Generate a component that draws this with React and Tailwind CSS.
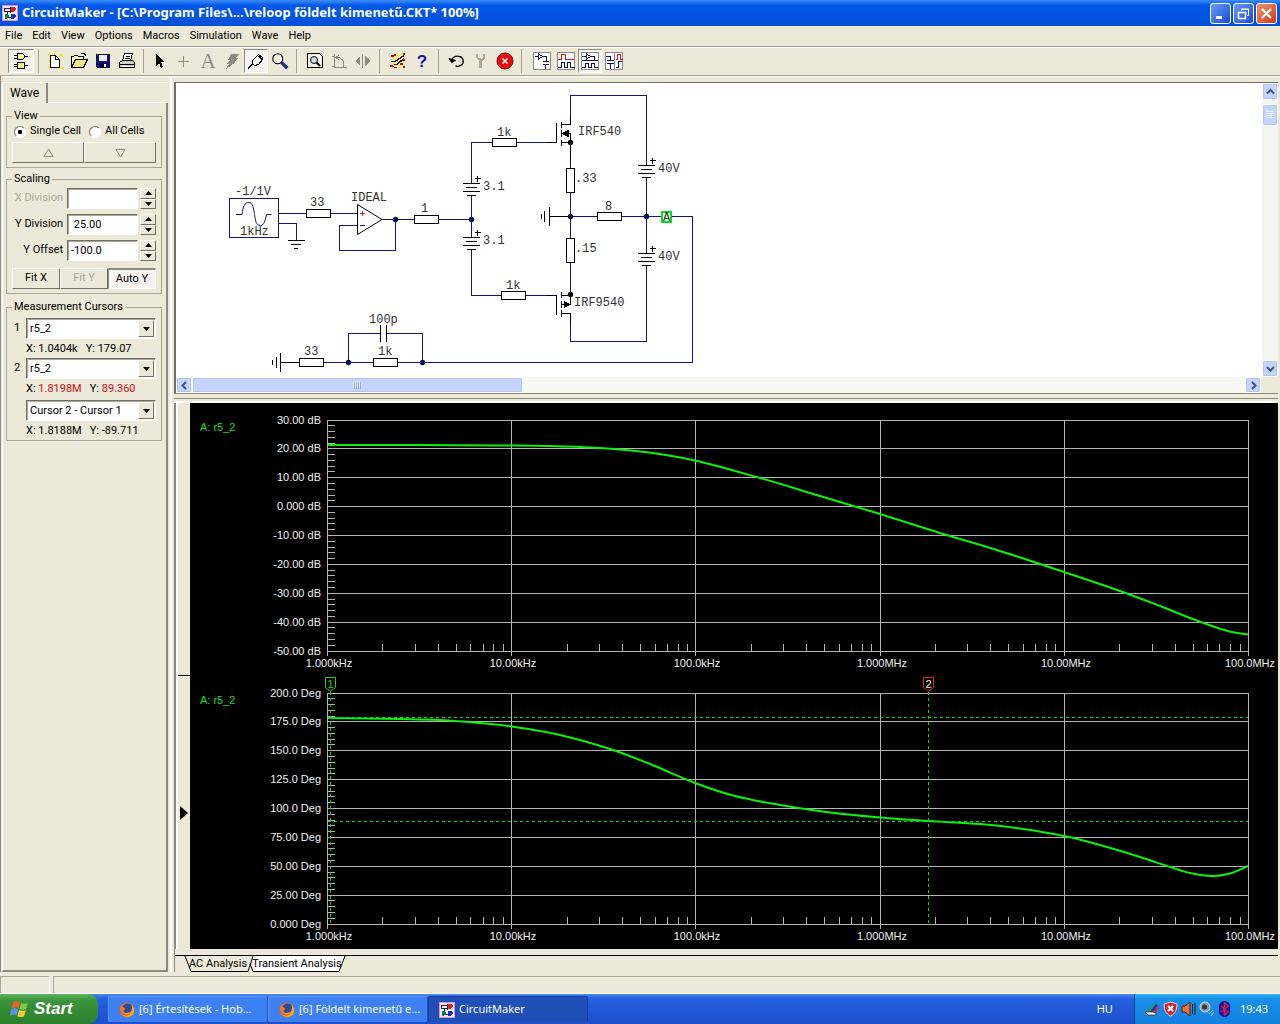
import React from "react";

/* ---------- title bar and toolbar icons ---------- */

const AppIcon = ({ size = 16 }) => (
  <svg width={size} height={size} viewBox="0 0 16 16" shapeRendering="crispEdges" className="shrink-0">
    <rect width="16" height="16" fill="#f4f0f8" />
    <path d="M0 .5h16M.5 0v16M0 15.500h16M15.500 0v16" stroke="#e88ad0" fill="none" />
    <path d="M2 3.500h6M2 6.500h6M5.500 7v5M2.500 4v3M8.500 2v6M5 12.500h4" stroke="#223" fill="none" />
    <path d="M9 2h3l2 2-2 3H9z" fill="#e02020" />
    <path d="M9 9h3l2 2-2 3H9z" fill="#1030c0" />
    <path d="M3 9h2l2 2-2 3H3z" fill="#108040" />
  </svg>
);

const Ico = ({ children, s = 18 }) => (
  <svg width={s} height={s} viewBox="0 0 18 18" fill="none" stroke="#000" shapeRendering="crispEdges" className="shrink-0">
    {children}
  </svg>
);

const icons = {
  gates: (
    <Ico>
      <path d="M5.500 1.500h5l2 2v2l-2 2h-5zM5.500 10.500h7v6h-7z" fill="#f6f6a0" />
      <path d="M2 3.500h3M2 6.500h3M13 4.500h3M2 12.500h3M2 14.500h3M13 13.500h3" />
    </Ico>
  ),
  fresh: (
    <Ico>
      <path d="M3 2l3 3M16 2l-2 3M2 9h2M15 15l2 2M2 16l2-2M9 1v2" stroke="#f4f000" strokeWidth="2" />
      <path d="M4.500 3.500h5l4 4v8h-9z" fill="#fff" />
      <path d="M9.500 3.500v4h4" />
    </Ico>
  ),
  open: (
    <Ico>
      <path d="M1.500 15.500v-11h2l1-1h3l1 1h5v3" fill="#fdfdb0" />
      <path d="M1.500 15.500l4-8h12l-4 8z" fill="#f0e880" />
      <path d="M11 1.500h3l2 2" />
    </Ico>
  ),
  save: (
    <Ico>
      <path d="M2.500 2.500h13v13h-12l-1-1z" fill="#101078" stroke="#101060" />
      <path d="M5 3h8v6H5z" fill="#e8ecf4" stroke="none" />
      <path d="M5 11h8v5H5z" fill="#000040" stroke="none" />
      <path d="M10 12h2v3h-2z" fill="#fff" stroke="none" />
    </Ico>
  ),
  print: (
    <Ico>
      <path d="M4.500 8.500l2-7h8l-2 7z" fill="#fff" />
      <path d="M8 4.500h4M7 6.500h5" />
      <path d="M1.500 10.500l3-2h10l2 2v5h-15z" fill="#d4d0c8" />
      <path d="M1.500 12.500h15" />
      <path d="M4 14.500h8" stroke="#fff" />
    </Ico>
  ),
  pointer: (
    <Ico>
      <path d="M5 2v12l3-3 2 5 2-1-2-5h4z" fill="#000" stroke="none" />
    </Ico>
  ),
  plus: (
    <Ico>
      <path d="M8.500 4v11M3 9.500h11" stroke="#8c8a80" />
    </Ico>
  ),
  letter: <span className="font-['Liberation_Serif',serif] text-[21px] leading-none text-[#8c8a80]">A</span>,
  bolt: (
    <Ico>
      <path d="M8 2h8l-3 4h2l-4 4h2L3 17l3-5H4l3-4H5z" fill="#8c8a80" stroke="none" />
    </Ico>
  ),
  probe: (
    <Ico>
      <path d="M1 16.500l5-5" />
      <path d="M5.500 11.500v-3l5-5 5 4-4 5-4 1z" fill="#fff" />
      <path d="M9.500 4.500l2-2 4 3-1 3" />
    </Ico>
  ),
  zoom: (
    <Ico s={20}>
      <circle cx="7" cy="7" r="4.500" fill="#f4f4e8" shapeRendering="auto" />
      <path d="M10.500 10.500l5 5" stroke="#1a2e9c" strokeWidth="3" shapeRendering="auto" />
    </Ico>
  ),
  preview: (
    <Ico>
      <path d="M1.500 1.500h12l3 3v11h-15z" fill="#f4f4ea" />
      <circle cx="8" cy="8" r="3.500" fill="#cfe4e4" shapeRendering="auto" />
      <path d="M10.500 10.500l3.500 3.500" strokeWidth="2" shapeRendering="auto" />
    </Ico>
  ),
  rotate: (
    <Ico>
      <path d="M4.500 2v13h12M2 4.500h3M2 14.500h3" stroke="#8c8a80" />
      <path d="M7 5.500c5 0 7 3 7 9M9 3L6 5.500 9 8" stroke="#8c8a80" />
    </Ico>
  ),
  mirror: (
    <Ico>
      <path d="M6 4v10L1 9zM11 4v10l5-5z" fill="#8c8a80" stroke="none" />
      <path d="M8.500 2v14" stroke="#8c8a80" />
    </Ico>
  ),
  traces: (
    <Ico>
      <path d="M4 2h11v13H4z" fill="#fcf080" stroke="none" />
      <path d="M2 9.500h4l9-6M5 12.500h3l7-6M2 14.500h3" stroke="#101070" strokeWidth="1.500" />
      <path d="M5 2h2v2H5zM2 3h3v2H2zM14 1h2v2h-2zM1 13h3v2H1zM5 15h3v1H5zM11 11h3v2h-3zM14 14h2v2h-2zM13 7h3v2h-3z" fill="#b01010" stroke="none" />
    </Ico>
  ),
  help: <span className="font-['Liberation_Sans',sans-serif] text-[17px] leading-none text-[#1616b0] font-bold">?</span>,
  undo: (
    <Ico>
      <g shapeRendering="auto">
        <path d="M3.500 8.500c1-4 5-5 8-4 4 1 5 6 2 8.500-2 1.500-4 1.500-6 1" strokeWidth="1.300" />
        <path d="M1 6.500l2.500 4 4-2z" fill="#000" />
      </g>
    </Ico>
  ),
  wrench: (
    <Ico>
      <path d="M4 2v4l3 3v7h3V9l3-3V2h-2v4h-1l-1 1-1-1H6V2z" fill="#aaa89c" stroke="none" />
    </Ico>
  ),
  stop: (
    <Ico>
      <g shapeRendering="auto">
        <circle cx="9" cy="9" r="8" fill="#e80c0c" stroke="#7a0a0a" />
        <path d="M6.500 6.500l5 5M11.500 6.500l-5 5" stroke="#fff" strokeWidth="1.500" />
      </g>
    </Ico>
  ),
  schem: (
    <Ico>
      <rect x=".5" y=".5" width="17" height="17" fill="#fff" stroke="#888" />
      <path d="M2 4.500h3M5.500 2v5l4-2.500zM9 4.500h4v5M10 9.500h6M10 12.500h6M12.500 13v4" stroke="#101050" />
    </Ico>
  ),
  waveRed: (
    <Ico>
      <rect x=".5" y=".5" width="17" height="17" fill="#fff" stroke="#888" />
      <path d="M1 7.500h3.500v-5h4v5h8" stroke="#e01010" />
      <path d="M1 15.500h3.500v-5h3v5h3v-5h3v5h4" stroke="#101050" />
    </Ico>
  ),
  split: (
    <Ico>
      <rect x=".5" y=".5" width="17" height="17" fill="#fff" stroke="#888" />
      <path d="M1 8.500h16M1 4.500h4M5.500 2v5l4-2.500zM9 4.500h4.500v4M1 15.500h3.500v-4h3v4h3v-4h3v4h3" stroke="#101050" />
    </Ico>
  ),
  sideBySide: (
    <Ico>
      <rect x=".5" y=".5" width="17" height="17" fill="#fff" stroke="#888" />
      <path d="M9.500 1v16" stroke="#888" />
      <path d="M1 4.500h4.500v4M2 8.500h7M2 11.500h7M5.500 12v5M11 15.500h2.500v-6h3" stroke="#101050" />
      <path d="M11 7.500h1.500v-5h3v5h2" stroke="#e01010" />
    </Ico>
  ),
};

const toolGroups = [
  [["gates", "Parts browser", true]],
  [["fresh", "New"], ["open", "Open"], ["save", "Save"], ["print", "Print"]],
  [["pointer", "Select"], ["plus", "Wire"], ["letter", "Text"], ["bolt", "Delete"], ["probe", "Probe", true], ["zoom", "Zoom"]],
  [["preview", "Fit view"], ["rotate", "Rotate"], ["mirror", "Mirror"]],
  [["traces", "Digital mode"], ["help", "Help"]],
  [["undo", "Reset"], ["wrench", "Setup"], ["stop", "Stop"]],
  [["schem", "Schematic"], ["waveRed", "Waveforms"], ["split", "Split horizontally", true], ["sideBySide", "Split vertically"]],
];

const RAISED = "border border-t-white border-l-white border-r-[#716f64] border-b-[#716f64] bg-[#ece9d8]";
const SUNKEN = "border border-t-[#8c8a80] border-l-[#8c8a80] border-r-white border-b-white bg-[#f6f4ee]";

function TitleBar() {
  const btn = "flex h-[21px] w-[21px] items-center justify-center rounded-[3px] border border-white";
  return (
    <header className="flex h-[26px] items-center bg-linear-to-b from-[#3a8cf8] via-[#0458e8] via-20% to-[#0450d8] pl-[2px] pr-[3px]">
      <AppIcon />
      <h1 className="ml-1 flex-1 truncate font-['Noto_Sans','Open_Sans',sans-serif] text-[13px] font-bold text-white">
        CircuitMaker - [C:\Program Files\...\reloop földelt kimenetű.CKT* 100%]
      </h1>
      <div className="flex gap-[2px]">
        <button aria-label="Minimize" className={`${btn} bg-linear-to-br from-[#6a9cf8] to-[#1a48d0]`}>
          <svg width="15" height="15"><path d="M3 11.500h6" stroke="#fff" strokeWidth="3" /></svg>
        </button>
        <button aria-label="Restore" className={`${btn} bg-linear-to-br from-[#6a9cf8] to-[#1a48d0]`}>
          <svg width="15" height="15" fill="none" stroke="#fff"><path d="M5.500 5V3.500h7v6H11M5 3h8" /><path d="M2.500 6.500h7v6h-7zM2 6.500h8" strokeWidth="1.500" /></svg>
        </button>
        <button aria-label="Close" className={`${btn} bg-linear-to-br from-[#f09070] to-[#c83810]`}>
          <svg width="15" height="15"><path d="M3 3l9 9M12 3l-9 9" stroke="#fff" strokeWidth="2.200" /></svg>
        </button>
      </div>
    </header>
  );
}

function MenuBar() {
  return (
    <nav className="flex h-5 items-center text-[11px]">
      {["File", "Edit", "View", "Options", "Macros", "Simulation", "Wave", "Help"].map((m) => (
        <button key={m} className="px-[5px]">{m}</button>
      ))}
    </nav>
  );
}

function Toolbar() {
  return (
    <div className="flex h-[30px] items-center border-y border-[#a5a294] pl-2 shadow-[inset_0_1px_#fff,0_1px_#fff]" role="toolbar">
      {toolGroups.map((g, i) => (
        <React.Fragment key={i}>
          {i > 0 && <span className={`ml-1 h-6 w-px bg-[#a5a294] ${i < 3 ? "mr-1" : i < 6 ? "mr-1.5" : "mr-2"}`} />}
          {g.map(([name, label, pressed]) => (
            <button
              key={name}
              aria-label={label}
              className={`flex h-6 items-center justify-center ${i === 0 ? "w-[26px]" : "w-6"} ${pressed ? SUNKEN : ""}`}
            >
              {icons[name]}
            </button>
          ))}
        </React.Fragment>
      ))}
    </div>
  );
}

/* ---------- left panel ---------- */

function Group({ title, className = "", children }) {
  return (
    <fieldset className={`min-w-0 border border-[#aca899] px-[5px] ${className}`}>
      <legend className="px-[2px] leading-4">{title}</legend>
      {children}
    </fieldset>
  );
}

const Tri = ({ up }) => (
  <svg width="7" height="4" viewBox="0 0 7 4"><path d={up ? "M0 4h7L3.500 0z" : "M0 0h7L3.500 4z"} /></svg>
);

const FIELD = "border border-t-[#716f64] border-l-[#716f64] border-r-white border-b-white bg-white shadow-[inset_1px_1px_#aca899]";

function NumberRow({ id, label, value, disabled }) {
  return (
    <div className="flex h-[21px] items-center">
      <label htmlFor={id} className={`w-[51px] whitespace-nowrap text-right ${disabled ? "text-[#aca899]" : ""}`}>{label}</label>
      <input id={id} defaultValue={value} disabled={disabled} className={`ml-1 h-[21px] w-0 flex-1 pl-[3px] ${FIELD}`} />
      <div className="ml-[2px] flex h-[21px] w-4 flex-col">
        <button aria-label={`${label} up`} className={`flex flex-1 items-center justify-center ${RAISED}`}><Tri up /></button>
        <button aria-label={`${label} down`} className={`flex flex-1 items-center justify-center ${RAISED}`}><Tri /></button>
      </div>
    </div>
  );
}

function Combo({ label, value }) {
  return (
    <div className={`relative h-[21px] flex-1 ${FIELD}`}>
      <select aria-label={label} defaultValue={value} className="h-full w-full appearance-none bg-transparent pl-[3px] pt-px outline-none">
        <option>{value}</option>
      </select>
      <span className={`pointer-events-none absolute inset-y-px right-px flex w-4 items-center justify-center ${RAISED}`}><Tri /></span>
    </div>
  );
}

function Radio({ label, checked }) {
  return (
    <label className="flex items-center gap-1">
      <input
        type="radio"
        name="cells"
        defaultChecked={checked}
        className="h-3 w-3 appearance-none rounded-full border border-t-[#716f64] border-l-[#716f64] border-r-white border-b-white bg-white bg-center checked:bg-[radial-gradient(circle,#000_2px,#fff_2.500px)]"
      />
      {label}
    </label>
  );
}

function CursorReadout({ x, y, red }) {
  const c = red ? "text-[#d01020]" : "";
  return (
    <p className="flex h-[19px] items-center gap-2 pl-[14px] pt-px">
      <span>X: <span className={c}>{x}</span></span>
      <span>Y: <span className={c}>{y}</span></span>
    </p>
  );
}

function SidePanel() {
  return (
    <aside className="flex w-[170px] shrink-0 flex-col border-l border-[#8c8a80] pl-px pt-[6px] pr-[2px]">
      <div className="flex h-[21px] border-t border-white">
        <button className="w-[46px] border-l border-r-2 border-l-white border-r-[#8c8a80] text-[12px]">Wave</button>
        <span className="flex-1 border-b border-white" />
      </div>
      <div className="flex flex-1 flex-col border-b-2 border-l border-r-2 border-b-[#8c8a80] border-l-white border-r-[#8c8a80] pl-[3px] pr-1 pt-[5px]">
        <Group title="View" className="pb-1">
          <div className="flex h-[15px] items-center gap-2 pl-[2px]">
            <Radio label="Single Cell" checked />
            <Radio label="All Cells" />
          </div>
          <div className="mt-[3px] flex">
            <button aria-label="Previous cell" className={`flex h-[21px] flex-1 items-center justify-center ${RAISED}`}>
              <svg width="11" height="10" fill="none" stroke="#8c8a80"><path d="M1 8.500h9L5.500 1z" /></svg>
            </button>
            <button aria-label="Next cell" className={`flex h-[21px] flex-1 items-center justify-center ${RAISED}`}>
              <svg width="11" height="10" fill="none" stroke="#8c8a80"><path d="M1 1.500h9L5.500 9z" /></svg>
            </button>
          </div>
        </Group>
        <Group title="Scaling" className="mt-[3px] pb-1">
          <div className="mt-px flex flex-col gap-[5px]">
            <NumberRow id="xdiv" label="X Division" value="" disabled />
            <NumberRow id="ydiv" label="Y Division" value=" 25.00" />
            <NumberRow id="yoff" label="Y Offset" value="-100.0" />
          </div>
          <div className="mt-[7px] flex">
            <button className={`h-[21px] flex-1 ${RAISED}`}>Fit X</button>
            <button disabled className={`h-[21px] flex-1 text-[#aca899] ${RAISED}`}>Fit Y</button>
            <button className={`h-[21px] flex-1 border-t-2 ${SUNKEN}`}>Auto Y</button>
          </div>
        </Group>
        <Group title="Measurement Cursors" className="mt-[5px]">
          <div className="flex items-center pt-[3px]"><span className="w-[14px] pl-[2px]">1</span><Combo label="Cursor 1" value="r5_2" /></div>
          <CursorReadout x="1.0404k" y="179.07" />
          <div className="flex items-center"><span className="w-[14px] pl-[2px]">2</span><Combo label="Cursor 2" value="r5_2" /></div>
          <CursorReadout x="1.8198M" y="89.360" red />
          <div className="flex items-center pl-[14px] pt-[2px]"><Combo label="Difference" value="Cursor 2 - Cursor 1" /></div>
          <CursorReadout x="1.8188M" y="-89.711" />
        </Group>
      </div>
    </aside>
  );
}

/* ---------- schematic ---------- */

const Res = ({ x, y, v }) => (
  <rect x={x + 0.5} y={y + 0.5} width={v ? 8 : 24} height={v ? 24 : 8} fill="#fff" stroke="#000" />
);
const Dot = ({ x, y, fill = "#0a1050" }) => <circle cx={x + 0.5} cy={y + 0.5} r="2.700" fill={fill} shapeRendering="auto" />;
const Battery = ({ x, y }) => (
  <path
    d={`M${x - 8} ${y + 0.5}h17M${x - 5} ${y + 4.5}h11M${x - 8} ${y + 8.5}h17M${x - 4} ${y + 12.5}h9M${x + 4} ${y - 4.5}h6M${x + 6.5} ${y - 7}v6`}
  />
);

function Schematic() {
  const labels = [
    [235, 195, "-1/1V"], [240, 235, "1kHz"], [310, 206, "33"], [351, 201, "IDEAL"], [421, 212, "1"],
    [497, 136, "1k"], [483, 190, "3.1"], [483, 244, "3.1"], [506, 289, "1k"], [578, 135, "IRF540"],
    [575, 182, ".33"], [575, 252, ".15"], [574, 306, "IRF9540"], [605, 210, "8"], [658, 172, "40V"],
    [658, 260, "40V"], [369, 323, "100p"], [304, 355, "33"], [378, 355, "1k"],
  ];
  return (
    <svg viewBox="176 83 1086 294" width="1086" height="294" fill="none" shapeRendering="crispEdges" role="img" aria-label="Amplifier schematic">
      <g stroke="#14147c">
        <path d="M229.500 198.500h49v39h-49zM279 213.500h27M331 213.500h26M279 223.500h17.500v16M382 219.500h32M395.500 219v31.500h-56v-25h18M438 219.500h33M471.500 183v-40.500h21M471.500 196v41M471.500 250v45.500h30M517 142.500h30M525 295.500h22" />
        <path d="M570.500 124v-28.500h76v70M646.500 178v75M646.500 266v75.500h-76v-28M570.500 142v26M570.500 193v45M570.500 263v32M570 216.500h28M622 216.500h39M672 216.500h20.500v146h-295M324 362.500h49M348.500 362v-28.500h31M387 333.500h35.500v29" />
        <path d="M236 214.500h6C243 206 245 202.500 248.500 202.500C253 202.500 253.500 208 254.500 214.500C255.500 221 256 225.500 260.500 225.500C264 225.500 265 221 266.500 214.500h5" shapeRendering="auto" />
      </g>
      <g stroke="#000">
        <path d="M288 240.500h17M291 244.500h10M294 248.500h4" />
        <path d="M357.500 204.500v30l24.500-15z" fill="#fff" shapeRendering="auto" />
        <path d="M360 225.500h5" stroke="#14147c" />
        <path d="M360 213.500h5M362.500 211v5" stroke="#d02020" />
        <path d="M547 142.500h9.500M556.500 123v20M561.500 122v6M561.500 130v7M561.500 140v6M561 124.500h9.500v-8M561 133.500h9.500v9M561 142.500h9M570.500 143v18" />
        <path d="M562 133.500l6-3v6z" fill="#000" />
        <path d="M547 295.500h9.500M556.500 295v20M561.500 292v6M561.500 301v7M561.500 310v7M561 295.500h9M561 304.500h9.500v-9M561 313.500h9.500v8" />
        <path d="M570 304.500l-6-3v6z" fill="#000" />
        <path d="M570 216.500h-21M549.500 207v19M544.500 211v11M541.500 214v5" />
        <path d="M299 362.500h-19M280.500 353v19M276.500 357v11M272.500 360v5" />
        <path d="M380.500 325v17M386.500 325v17" />
        <Battery x={471} y={183} />
        <Battery x={471} y={237} />
        <Battery x={646} y={165} />
        <Battery x={646} y={253} />
      </g>
      <Res x={306} y={209} /><Res x={414} y={215} /><Res x={492} y={138} /><Res x={501} y={291} />
      <Res x={566} y={168} v /><Res x={566} y={238} v /><Res x={597} y={212} />
      <Res x={299} y={358} /><Res x={373} y={358} />
      <Dot x={395} y={219} /><Dot x={471} y={219} /><Dot x={570} y={216} /><Dot x={646} y={216} />
      <Dot x={348} y={362} /><Dot x={422} y={362} />
      <Dot x={570} y={142} fill="#000" /><Dot x={570} y={294} fill="#000" />
      <rect x="662" y="212" width="9" height="10" stroke="#10d820" strokeWidth="2" fill="#e8f8e8" />
      <g className="font-['Liberation_Mono',monospace] text-[12px]" fill="#333">
        {labels.map(([x, y, t], i) => <text key={i} x={x} y={y}>{t}</text>)}
        <text x="663" y="221">A</text>
      </g>
    </svg>
  );
}

const SCROLL = "flex shrink-0 items-center justify-center rounded-[2px] border border-white bg-[#c4d4fc] shadow-[0_0_0_1px_#b4c4ec_inset]";
const Chevron = ({ d }) => (
  <svg width="9" height="9" viewBox="0 0 9 9" fill="none" stroke="#3c5480" strokeWidth="2"><path d={d} /></svg>
);

function SchematicPane() {
  return (
    <section className="flex flex-col border-l-2 border-t border-[#716f64]">
      <div className="flex">
        <div className="min-w-0 flex-1 overflow-hidden bg-white"><Schematic /></div>
        <div className="flex w-4 flex-col bg-[#f4f4ee]">
          <button aria-label="Scroll up" className={`h-[17px] ${SCROLL}`}><Chevron d="M1 6.500L4.500 3 8 6.500" /></button>
          <div className={`mt-1 h-[22px] ${SCROLL}`}>
            <svg width="8" height="8" stroke="#eef4fe"><path d="M0 .5h8M0 2.500h8M0 4.500h8M0 6.500h8" /></svg>
          </div>
          <button aria-label="Scroll down" className={`mt-auto h-[17px] ${SCROLL}`}><Chevron d="M1 3L4.500 6.500 8 3" /></button>
        </div>
      </div>
      <div className="flex h-4 bg-[#f8f8f2]">
        <button aria-label="Scroll left" className={`w-4 ${SCROLL}`}><Chevron d="M6 1L2.500 4.500 6 8" /></button>
        <div className={`w-[30%] ${SCROLL}`}>
          <svg width="8" height="8" stroke="#eef4fe"><path d="M.5 0v7M2.500 0v7M4.500 0v7M6.500 0v7" /><path d="M1.500 1v7M3.500 1v7M5.500 1v7M7.500 1v7" stroke="#8ca8e8" /></svg>
        </div>
        <button aria-label="Scroll right" className={`ml-auto w-4 ${SCROLL}`}><Chevron d="M3 1l3.500 3.500L3 8" /></button>
        <span className="w-[17px] bg-[#ece9d8]" />
      </div>
    </section>
  );
}

/* ---------- plots ---------- */

const LEFT = 328;
const DECADE = 184.2;
const RIGHT = LEFT + 5 * DECADE;
const HEIGHT = 231;
const freq = ["1.000kHz", "10.00kHz", "100.0kHz", "1.000MHz", "10.00MHz", "100.0MHz"];

const smooth = (p) => {
  let d = `M${p[0][0]} ${p[0][1]}`;
  for (let i = 0; i < p.length - 1; i++) {
    const a = p[i - 1] || p[i], b = p[i], c = p[i + 1], e = p[i + 2] || c;
    d += `C${b[0] + (c[0] - a[0]) / 6} ${b[1] + (c[1] - a[1]) / 6} ${c[0] - (e[0] - b[0]) / 6} ${c[1] - (e[1] - b[1]) / 6} ${c[0]} ${c[1]}`;
  }
  return d;
};

function Plot({ top, labels, curve }) {
  const bottom = top + HEIGHT;
  const step = HEIGHT / 8;
  return (
    <g>
      <g stroke="#b4b4b4" shapeRendering="crispEdges">
        {labels.map((_, i) => {
          const y = Math.floor(top + i * step) + 0.5;
          return <line key={i} x1={LEFT} x2={RIGHT} y1={y} y2={y} />;
        })}
        {freq.map((_, i) => {
          const x = Math.round(LEFT + i * DECADE) - 0.5;
          return <line key={i} x1={x} x2={x} y1={top} y2={bottom + 5} />;
        })}
        {Array.from({ length: 40 }, (_, i) => {
          const y = Math.floor(top + (i * step) / 5) + 0.5;
          return <line key={i} x1={LEFT} x2={LEFT + 7} y1={y} y2={y} />;
        })}
        {[0, 1, 2, 3, 4].flatMap((k) =>
          [2, 3, 4, 5, 6, 7, 8, 9].map((n) => {
            const x = Math.round(LEFT + DECADE * (k + Math.log10(n))) - 0.5;
            return <line key={`${k}-${n}`} x1={x} x2={x} y1={bottom - 7} y2={bottom} />;
          })
        )}
      </g>
      <g fill="#f0f0f0">
        {labels.map((t, i) => <text key={t} x="321" y={Math.floor(top + i * step) + 4} textAnchor="end">{t}</text>)}
        {freq.map((t, i) => <text key={t} x={Math.round(LEFT + i * DECADE) + 1} y={bottom + 16} textAnchor="middle">{t}</text>)}
      </g>
      <text x="200" y={top + 11} fill="#20dc20">A: r5_2</text>
      <path d={smooth(curve)} fill="none" stroke="#0cf00c" strokeWidth="2" />
    </g>
  );
}

const gain = [[328, 445], [420, 445], [495, 445.5], [550, 446], [600, 448], [645, 452], [695, 460.5], [760, 478], [820, 496], [880, 514], [940, 533], [1000, 551], [1064, 572], [1120, 591], [1160, 606], [1190, 618], [1215, 627], [1232, 632], [1248, 634.5]];
const phase = [[328, 718], [400, 719], [440, 720], [480, 723], [512, 726.5], [560, 735], [610, 749], [650, 764], [695, 783], [735, 796], [780, 805], [830, 812.5], [880, 817.5], [928, 821], [980, 824], [1020, 828.500], [1064, 836], [1100, 845], [1140, 857], [1170, 867], [1190, 873], [1212, 876], [1230, 873.5], [1248, 866]];

function Plots() {
  return (
    <svg viewBox="190 403 1088 546" className="block h-auto w-full bg-black font-['Liberation_Sans',sans-serif] text-[11px]" role="img" aria-label="AC analysis plots">
      <Plot top={420} curve={gain} labels={["30.00 dB", "20.00 dB", "10.00 dB", "0.000 dB", "-10.00 dB", "-20.00 dB", "-30.00 dB", "-40.00 dB", "-50.00 dB"]} />
      <Plot top={693} curve={phase} labels={["200.0 Deg", "175.0 Deg", "150.0 Deg", "125.0 Deg", "100.0 Deg", "75.00 Deg", "50.00 Deg", "25.00 Deg", "0.000 Deg"]} />
      <g stroke="#10d020" fill="none" strokeDasharray="3 3" shapeRendering="crispEdges">
        <path d="M328 717.500h920M328 821.500h920M330.500 692v232M928.500 692v232" />
      </g>
      <path d="M325.500 677.500h10v10l-5 4-5-4z" fill="#000" stroke="#20d020" />
      <path d="M923.500 677.500h10v10l-5 4-5-4z" fill="#000" stroke="#f01818" />
      <text x="330.500" y="688" textAnchor="middle" fill="#20d020">1</text>
      <text x="928.500" y="688" textAnchor="middle" fill="#f0f0f0">2</text>
    </svg>
  );
}

function AnalysisTabs() {
  return (
    <div className="flex border-l border-[#8c8a80] pt-[6px]">
      <div className="flex flex-1 border-t border-black pl-2">
        <div className="relative h-4">
          <svg className="absolute left-0 top-0" width="164" height="17" fill="none" stroke="#000">
            <path d="M68 0L72 15.500H156L162 0z" fill="#fff" stroke="none" />
            <path d="M2 0L8 15.500H65L70 0M67 8L70 15.500H156L162 0" />
          </svg>
          <div className="relative flex h-4 items-center">
            <button className="ml-[6px] w-[58px] whitespace-nowrap">AC Analysis</button>
            <button className="ml-1 w-[92px] whitespace-nowrap">Transient Analysis</button>
          </div>
        </div>
      </div>
    </div>
  );
}

/* ---------- task bar ---------- */

const Firefox = () => (
  <svg width="16" height="16" viewBox="0 0 16 16" className="shrink-0">
    <circle cx="8" cy="8" r="7.500" fill="#e8641c" />
    <circle cx="8.500" cy="6.500" r="5" fill="#2a4c9c" />
    <path d="M1 5c1 4 3 6 6 6 3 0 4-1 5-2-1 3-4 4-6 3M13 3c3 3 3 9-1 11-3 2-8 1-10-2 4 3 9 2 10-2 1-2 1-4 1-7z" fill="#f8a828" />
    <path d="M1.500 4l3 1 2 2-2 2-3-1z" fill="#f07820" />
  </svg>
);

const Flag = () => (
  <svg width="20" height="20" viewBox="0 0 18 18" className="shrink-0">
    <path d="M3 3c2-1.500 4-1.500 6 0L7.500 8.500c-2-1.500-4-1.500-6 0z" fill="#f0602c" />
    <path d="M10 3.500c2 1 4 1 6 0L14.500 9c-2 1-4 1-6 0z" fill="#80c83c" />
    <path d="M1.200 9.500c2-1.500 4-1.500 6 0L5.700 15c-2-1.500-4-1.500-6 0z" fill="#5c94f0" />
    <path d="M8.200 10c2 1 4 1 6 0l-1.500 5.500c-2 1-4 1-6 0z" fill="#f8cc34" />
  </svg>
);

function TrayIcons() {
  return (
    <div className="flex items-center gap-[3px]">
      <svg width="15" height="16" viewBox="0 0 15 16"><path d="M2 10l8-8 2 1-7 9z" fill="#20a040" /><path d="M5 11l6-8 2 1-5 8z" fill="#2030d0" /><path d="M7 12l6-7 1 1-4 7z" fill="#e02820" /><path d="M0 11h8l4 2-2 1H3z" fill="#fff" stroke="#222" strokeWidth=".7" /></svg>
      <svg width="15" height="16" viewBox="0 0 15 16"><path d="M7.500 1L14 3c0 6-2 10-6.500 12C3 13 1 9 1 3z" fill="#d02838" stroke="#e8d0d8" /><path d="M5 5l5 5M10 5l-5 5" stroke="#fff" strokeWidth="2" /></svg>
      <svg width="15" height="16" viewBox="0 0 15 16"><path d="M1 5h3l5-4v14l-5-4H1z" fill="#e87040" stroke="#502010" /><path d="M11.500 3v10M14 2v12" stroke="#181818" /></svg>
      <svg width="15" height="16" viewBox="0 0 15 16"><circle cx="6" cy="6" r="5" fill="#8c98a0" stroke="#d8e0e8" /><circle cx="5.500" cy="6" r="2.500" fill="#303840" /><path d="M10 13l4-4M12 15l3-4" stroke="#a8c8e8" /></svg>
      <svg width="15" height="16" viewBox="0 0 15 16"><rect x="2" y="0" width="11" height="16" rx="5.500" fill="#1414b4" /><path d="M4 5l7 6-3.500 3V2L11 5l-7 6" fill="none" stroke="#e02030" strokeWidth="1.500" /></svg>
    </div>
  );
}

function TaskButton({ icon, active, children }) {
  return (
    <button
      className={`flex h-[26px] w-40 items-center gap-1 rounded-[2px] border-x border-t pl-2.5 pr-1 ${
        active ? "border-[#163c98] bg-[#1e50b8]" : "border-[#5c98fc] border-r-[#1c50c4] bg-[#3c80f4]"
      }`}
    >
      {icon}
      <span className="whitespace-nowrap">{children}</span>
    </button>
  );
}

function TaskBar() {
  return (
    <footer className="flex h-[30px] items-center bg-linear-to-b from-[#4a8cf4] via-[#2460e0] via-15% to-[#1c50cc] font-['Noto_Sans',sans-serif] text-[11px] text-white">
      <button className="flex h-full w-[98px] items-center gap-1 rounded-r-[10px] bg-linear-to-b from-[#5cb45c] via-[#3c943c] via-20% to-[#2c802c] pl-2.5 font-['Liberation_Sans',sans-serif] text-[17px] font-bold italic">
        <Flag />
        Start
      </button>
      <div className="ml-2.5 flex flex-1">
        <TaskButton icon={<Firefox />}>[6] Értesítések - Hob...</TaskButton>
        <TaskButton icon={<Firefox />}>[6] Földelt kimenetű e...</TaskButton>
        <TaskButton icon={<AppIcon />} active>CircuitMaker</TaskButton>
      </div>
      <button className="mr-[21px]">HU</button>
      <div className="flex h-full items-center gap-2 border-l border-[#104080] bg-linear-to-b from-[#30b0f8] via-[#1890e8] via-15% to-[#1480e0] pl-[10px] pr-3">
        <TrayIcons />
        <span>19:43</span>
      </div>
    </footer>
  );
}

export default function App() {
  return (
    <div className="flex min-h-screen flex-col bg-[#ece9d8] font-['Roboto','Liberation_Sans',sans-serif] text-[11px] text-black">
      <TitleBar />
      <MenuBar />
      <Toolbar />
      <main className="flex flex-1">
        <SidePanel />
        <div className="flex min-w-0 flex-1 flex-col border-l-2 border-white pl-[2px] pr-[2px] pt-[6px]">
          <SchematicPane />
          <div className="h-[10px] border-b-2 border-t border-b-white border-t-[#8c8a80] pt-1">
            <div className="border-t border-[#8c8a80]" />
          </div>
          <section className="flex flex-1 border-l-2 border-[#8c8a80]">
            <div className="flex w-[14px] shrink-0 flex-col border-l-2 border-white">
              <div className="h-1/2 border-b border-black" />
              <div className="flex flex-1 items-center justify-center border-t border-white">
                <svg width="8" height="14" viewBox="0 0 8 14"><path d="M0 0v14l8-7z" /></svg>
              </div>
            </div>
            <div className="min-w-0 flex-1 bg-black"><Plots /></div>
          </section>
          <AnalysisTabs />
        </div>
      </main>
      <div className="mt-1 flex h-[18px] gap-[3px] border-b border-white">
        <div className="w-[50px] border-l border-r border-t border-[#aca899] border-r-white" />
        <div className="flex-1 border-l border-t border-[#aca899]" />
      </div>
      <TaskBar />
    </div>
  );
}
